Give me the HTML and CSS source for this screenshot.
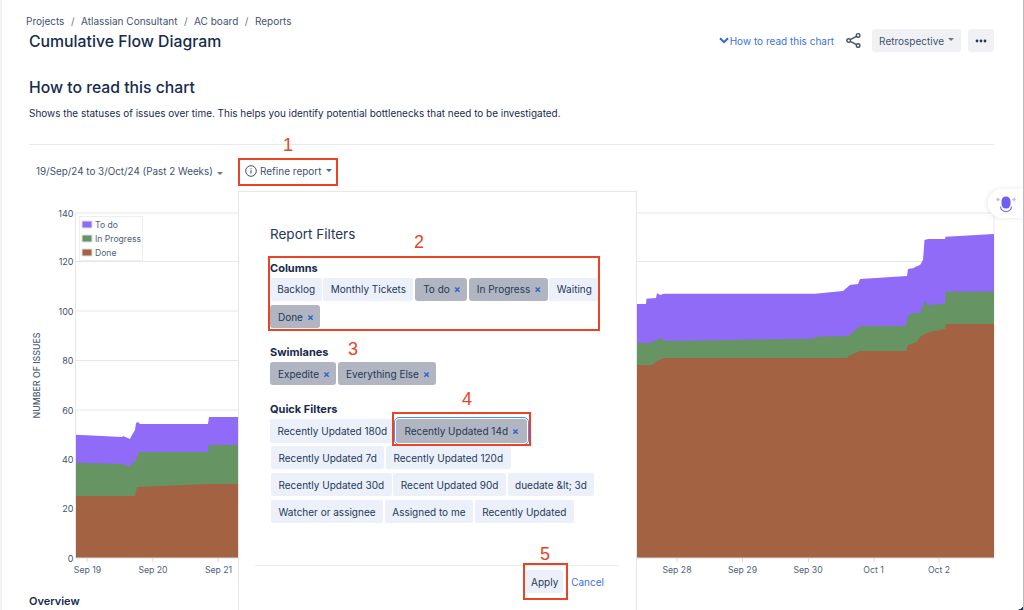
FILE: index.html
```html
<!DOCTYPE html>
<html lang="en">
<head>
<meta charset="utf-8">
<title>Cumulative Flow Diagram</title>
<link rel="stylesheet" href="styles.css">
</head>
<body>
<div class="page">
  <nav class="crumbs"><span>Projects</span><i>/</i><span>Atlassian Consultant</span><i>/</i><span>AC board</span><i>/</i><span>Reports</span></nav>
  <header class="head">
    <h1>Cumulative Flow Diagram</h1>
    <div class="actions">
      <a class="howto"><svg class="chev" viewBox="0 0 10 7"><path d="M1 1.2l4 4 4-4" fill="none" stroke="#2f66dc" stroke-width="2"/></svg>How to read this chart</a>
      <svg class="share" viewBox="0 0 14 14"><g fill="none" stroke="#42526e" stroke-width="1.3"><circle cx="2.5" cy="7" r="1.7"/><circle cx="11.3" cy="2.3" r="1.7"/><circle cx="11.3" cy="11.7" r="1.7"/><path d="M4 6.2l5.8-3.1M4 7.8l5.8 3.1"/></g></svg>
      <button class="btn">Retrospective<b class="caret"></b></button>
      <button class="btn more"><svg viewBox="0 0 12 4" class="dots"><circle cx="2" cy="2" r="1.4"/><circle cx="6" cy="2" r="1.4"/><circle cx="10" cy="2" r="1.4"/></svg></button>
    </div>
  </header>
  <h2>How to read this chart</h2>
  <p class="desc">Shows the statuses of issues over time. This helps you identify potential bottlenecks that need to be investigated.</p>
  <hr class="rule">
  <div class="toolbar">
    <span class="range">19/Sep/24 to 3/Oct/24 (Past 2 Weeks)<b class="caret"></b></span>
    <span class="refine"><svg class="info" viewBox="0 0 12 12"><circle cx="6" cy="6" r="5.3" fill="none" stroke="#42526e"/><path d="M6 5.2v3.4M6 3.2v1.1" stroke="#42526e" stroke-width="1.1"/></svg>Refine report<b class="caret blue"></b></span>
  </div>
  <svg class="chart" viewBox="0 0 995 390" width="995" height="390">
    <g class="grid">
      <path d="M75.5 23H994M75.5 71.5H994M75.5 121H994M75.5 170.5H994M75.5 220H994M75.5 269H994M75.5 318.5H994M75.5 23V368M994 23V368"/>
    </g>
    <g class="ylabels" text-anchor="end">
      <text x="73.500" y="26.500">140</text><text x="73.500" y="75">120</text><text x="73.500" y="124.500">100</text><text x="73.500" y="174">80</text><text x="73.500" y="223.500">60</text><text x="73.500" y="272.500">40</text><text x="73.500" y="322">20</text><text x="73.500" y="371.500">0</text>
    </g>
    <text class="ytitle" transform="translate(39.500 185.500) rotate(-90)">NUMBER OF ISSUES</text>
    <polygon class="a-todo" points="76,244.700 122,247 123,246 130,249 132,245 135,240 136,233 138,232 140,234 208,234 209,227 240,227 637,114 646,114 646.500,108.700 656,108 657,103 660,105 664,103.700 815,103.700 843,101 850,95 858,94 860,89 907,86 908,79 914,78 915,77 920,75 923,70 924.500,50 928,49 930,49 945,49 945.500,46.700 994,44 994,368 76,368"/>
    <polygon class="a-prog" points="76,272.700 122,274 130,276.700 132,272 135,273 137,267 139,262 208,262 209,254.700 240,255 637,153 650,153 657,150 660,148 665,151 815,148.700 815.500,146.700 849,146 853,141.700 860,136 906,136 908,125 914,123 920,123 922,119 925,110.700 928,116 930,115 945,113.700 945.500,101.700 994,101.700 994,368 76,368"/>
    <polygon class="a-done" points="76,306 135,306 137,297 208,294 240,294 637,175 652,175 657,170.700 665,168 847,168 849,165.700 860,161 906,161 908,155 917,152 921,146 930,141.700 945,139 946,134 994,134 994,368 76,368"/>
    <path class="base" d="M75.500 368H994M87 368v4M153 368v4M218 368v4M677 368v4M742.500 368v4M808.500 368v4M874 368v4M939 368v4"/>
    <g class="xlabels" text-anchor="middle">
      <text x="87.500" y="383">Sep 19</text><text x="153" y="383">Sep 20</text><text x="218.500" y="383">Sep 21</text><text x="677" y="383">Sep 28</text><text x="742.500" y="383">Sep 29</text><text x="808" y="383">Sep 30</text><text x="873.500" y="383">Oct 1</text><text x="939" y="383">Oct 2</text>
    </g>
    <g class="legend">
      <rect class="l-box" x="79.500" y="26.500" width="63" height="44"/>
      <rect class="a-todo l-sw" x="82" y="31" width="10" height="7"/><text x="95" y="37.500">To do</text>
      <rect class="a-prog l-sw" x="82" y="45" width="10" height="7"/><text x="95" y="51.500">In Progress</text>
      <rect class="a-done l-sw" x="82" y="59" width="10" height="7"/><text x="95" y="65.500">Done</text>
    </g>
  </svg>
  <h3 class="overview">Overview</h3>

  <section class="popup">
    <h4>Report Filters</h4>
    <h5 class="first">Columns</h5>
    <div class="chips">
      <span class="chip tight">Backlog</span><span class="chip">Monthly Tickets</span><span class="chip on">To do<b>×</b></span><span class="chip on">In Progress<b>×</b></span><span class="chip">Waiting</span><span class="chip on">Done<b>×</b></span>
    </div>
    <h5 class="swim">Swimlanes</h5>
    <div class="chips">
      <span class="chip on">Expedite<b>×</b></span><span class="chip on">Everything Else<b>×</b></span>
    </div>
    <h5 class="quick">Quick Filters</h5>
    <div class="chips dense">
      <span class="chip">Recently Updated 180d</span><span class="chip on focus">Recently Updated 14d<b>×</b></span><span class="chip ind">Recently Updated 7d</span><span class="chip">Recently Updated 120d</span><span class="chip ind">Recently Updated 30d</span><span class="chip">Recent Updated 90d</span><span class="chip">duedate &amp;lt; 3d</span><span class="chip ind">Watcher or assignee</span><span class="chip">Assigned to me</span><span class="chip">Recently Updated</span>
    </div>
    <footer class="pop-foot"><button class="apply">Apply</button><a class="cancel">Cancel</a></footer>
  </section>

  <div class="ai"><svg viewBox="0 0 20 16" class="ai-ico"><path d="M0 3.500l2-2 2 2-2 2zM16 3.500l2-2 2 2-2 2z" fill="#c9bcf7"/><rect x="5.500" y="0.500" width="9" height="12" rx="4.500" fill="#6f5ff0"/><path d="M4.500 10.500a5.500 5 0 0 0 11 0" fill="none" stroke="#7b68f0" stroke-width="1.100"/></svg></div>
  <span class="edge"></span><span class="corner"></span>

  <span class="mark m1"></span><span class="num n1">1</span>
  <span class="mark m2"></span><span class="num n2">2</span>
  <span class="num n3">3</span>
  <span class="mark m4"></span><span class="num n4">4</span>
  <span class="mark m5"></span><span class="num n5">5</span>
</div>
</body>
</html>
```
FILE: styles.css
```css
* { box-sizing: border-box; }
html, body { margin: 0; height: 100%; overflow: hidden; background: #fff; }
body { font-family: Inter, "Liberation Sans", sans-serif; color: #253858; font-size: 10px; }
.page { position: relative; width: 1024px; height: 610px; overflow: hidden; padding: 14px 29px 0 27px; border-left: 2px solid #f1f2f4; border-right: 1px solid #b9bbc0; }
.crumbs { display: flex; align-items: center; height: 13px; margin-left: -3px; color: #42526e; }
.crumbs i { font-style: normal; margin: 0 6.500px; color: #6b778c; }
.head { display: flex; justify-content: space-between; align-items: flex-start; margin-top: 2px; height: 39px; }
h1 { margin: 1px 0 0; font-size: 15.800px; line-height: 24px; font-weight: 500; color: #172b4d; }
.actions { display: flex; align-items: center; height: 23px; }
.howto { display: flex; align-items: center; color: #3b73e0; margin-right: 12px; }
.chev { width: 10px; height: 7px; margin-right: 1px; }
.share { width: 15px; height: 15px; margin-right: 11px; }
.btn { height: 23px; border: 0; border-radius: 3px; background: #f0f1f4; color: #42526e; font: inherit; padding: 0 7px; display: flex; align-items: center; }
.more { width: 26px; margin-left: 7px; justify-content: center; padding: 0; }
.dots { width: 12px; height: 4px; fill: #253858; }
.caret { display: inline-block; width: 0; height: 0; margin-left: 4px; margin-top: -2px; border: 3px solid transparent; border-top-color: #6b778c; border-bottom: 0; }
.caret.blue { border-top-color: #2f66dc; }
h2 { margin: 8px 0 0; font-size: 15.750px; line-height: 24px; font-weight: 500; color: #172b4d; }
.desc { margin: 5px 0 0; line-height: 16px; font-size: 9.950px; color: #172b4d; }
.rule { margin: 23px 0 0; border: 0; border-top: 1px solid #e9eaee; }
.toolbar { display: flex; align-items: center; height: 28px; margin-top: 12px; padding-left: 7px; color: #42526e; }
.range { width: 209px; font-size: 9.850px; }
.refine { display: flex; align-items: center; }
.info { width: 12px; height: 12px; margin-right: 3px; }
.chart { display: block; margin: 5px 0 0 -29px; overflow: visible; font-family: Inter, "Liberation Sans", sans-serif; }
.grid path { fill: none; stroke: #e6e7ec; stroke-width: 1; }
.ylabels text { font-size: 9px; fill: #42526e; }
.xlabels text { font-size: 8.700px; fill: #505f79; }
.ytitle { font-size: 8.800px; font-weight: 500; fill: #505f79; text-anchor: middle; }
.a-todo { fill: #8f6bf7; }
.a-prog { fill: #669463; }
.a-done { fill: #a36342; }
.base { fill: none; stroke: #d9dbe2; }
.legend text { font-size: 8.600px; fill: #505f79; }
.l-box { fill: #fff; stroke: #eceef2; }
.l-sw { stroke: #e0e0e6; }
.overview { margin: 14px 0 0; font-size: 11px; font-weight: 600; color: #172b4d; }
.popup { position: absolute; left: 236px; top: 191px; width: 399px; height: 430px; background: #fff; border: 1px solid #e6e7ec; padding: 0 18px 0 31px; }
h4 { margin: 33px 0 0; font-size: 13.500px; line-height: 18px; font-weight: 400; color: #253858; }
h5 { margin: 0; font-size: 11px; line-height: 14px; font-weight: 700; color: #172b4d; }
h5.first { margin-top: 17.700px; }
h5.swim { margin-top: 16.700px; }
h5.quick { margin-top: 17px; }
.chips { display: flex; flex-wrap: wrap; margin-top: 3px; row-gap: 4px; column-gap: 1.700px; }
.chips.dense { row-gap: 3.600px; }
.chip { display: inline-flex; align-items: center; height: 23.300px; padding: 0 7.500px; background: #ebf0fb; border-radius: 2px; color: #253858; white-space: nowrap; }
.chip.tight { padding: 0 6.500px; margin-left: .7px; }
.chip.on { background: #b0b5c1; border-radius: 3px; padding: 0 6.500px 0 8px; }
.chip b { margin-left: 4px; color: #2f5fd0; font-size: 10px; line-height: 10px; }
.chip.focus { padding-right: 8px; outline: 1.500px solid #4c8dff; outline-offset: 1px; }
.chip.ind { margin-left: 1px; }
.pop-foot { position: absolute; left: 16px; right: 17px; top: 373px; border-top: 1px solid #ebecf0; padding: 4px 15px 0 0; display: flex; justify-content: flex-end; align-items: center; }
.apply { width: 37px; height: 23px; border: 0; border-radius: 3px; background: #ebf0fb; color: #253858; font: inherit; padding: 0; }
.cancel { margin-left: 8px; color: #3b73e0; }
.ai { position: absolute; right: -1px; top: 189px; width: 36px; height: 29px; background: #fff; border-radius: 15px 0 0 15px; box-shadow: -1px 0 5px rgba(9, 30, 66, .1); display: flex; align-items: center; justify-content: center; }
.ai-ico { width: 20px; height: 16px; }
.edge { position: absolute; right: -1px; top: 0; width: 1px; height: 38px; background: #2b4c9f; }
.corner { position: absolute; right: -1px; bottom: 0; width: 7px; height: 7px; background: radial-gradient(circle at 0 0, transparent 6.500px, #243a63 7px); }
.mark { position: absolute; border: 2.200px solid #ea4325; }
.m1 { left: 235.700px; top: 158px; width: 100.300px; height: 28px; }
.m2 { left: 266px; top: 255.700px; width: 332.300px; height: 75px; }
.m4 { left: 389.700px; top: 412.300px; width: 139.300px; height: 33.700px; }
.m5 { left: 520.700px; top: 563.300px; width: 45.600px; height: 36.700px; }
.num { position: absolute; font-family: "Liberation Sans", sans-serif; font-size: 18px; line-height: 18px; color: #ea4325; }
.n1 { left: 281px; top: 136px; }
.n2 { left: 412px; top: 233px; }
.n3 { left: 346px; top: 340px; }
.n4 { left: 460px; top: 390px; }
.n5 { left: 538px; top: 545px; }
```
